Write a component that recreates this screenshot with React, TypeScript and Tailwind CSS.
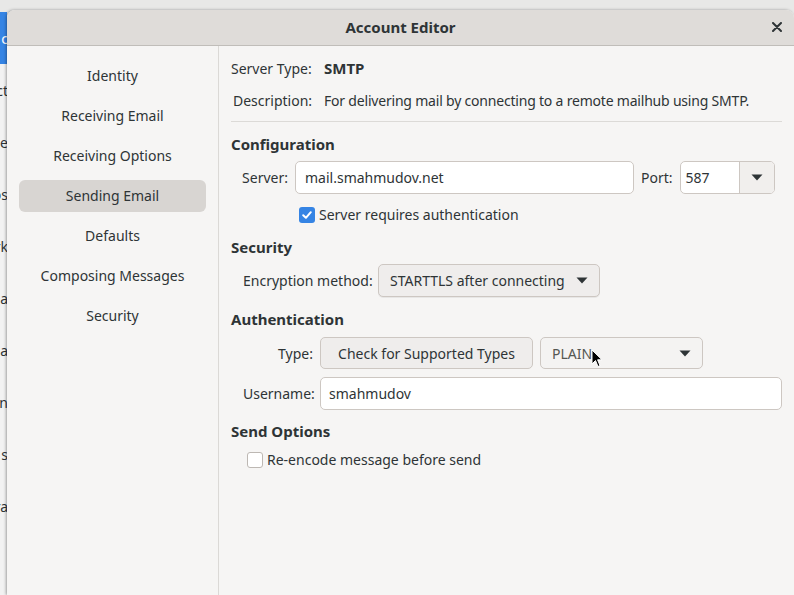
import { useState } from 'react';

const font = { fontFamily: '"Noto Sans", "Open Sans", sans-serif' };

const pages = [
  'Identity',
  'Receiving Email',
  'Receiving Options',
  'Sending Email',
  'Defaults',
  'Composing Messages',
  'Security',
];

// bits of the main window peeking out at the left edge
const behind = [
  { t: 'c', blue: true },
  { t: 'ct' },
  { t: 'e' },
  { t: 'os' },
  { t: 'rk' },
  { t: 'a' },
  { t: 'sa' },
  { t: 'n' },
  { t: 's' },
  { t: 'ra' },
];

function Caret() {
  return (
    <svg width="12" height="7" viewBox="0 0 12 7" className="shrink-0">
      <path d="M0.5 0.5 L11.5 0.5 L6 6.5 Z" fill="#2e3436" />
    </svg>
  );
}

function Check({ on }: { on: boolean }) {
  return on ? (
    <span className="flex h-4 w-4 items-center justify-center rounded-[3px] bg-[#3584e4]">
      <svg width="12" height="12" viewBox="0 0 12 12">
        <path d="M2.2 6.2 L4.9 8.8 L9.8 3.2" fill="none" stroke="#fff" strokeWidth="2" strokeLinecap="round" strokeLinejoin="round" />
      </svg>
    </span>
  ) : (
    <span className="h-4 w-4 rounded-[3px] border border-[#bdb8b3] bg-white" />
  );
}

export default function App() {
  const [selected, setSelected] = useState('Sending Email');
  const [auth, setAuth] = useState(true);
  const [reencode, setReencode] = useState(false);

  return (
    <div className="relative flex h-[595px] w-[794px] overflow-hidden bg-[#e8e8e7] text-[14px] text-[#2e3436]" style={font}>
      <div className="mt-[12px] flex w-[7px] shrink-0 flex-col overflow-hidden bg-[#f2f2f2] text-[#2e3436]">
        {behind.map((b, i) => (
          <div
            key={i}
            className={`flex h-[52px] shrink-0 items-center justify-end whitespace-nowrap ${b.blue ? 'bg-[#3584e4] text-white' : ''}`}
          >
            <span className="-mr-[1px]">{b.t}</span>
          </div>
        ))}
      </div>

      <div className="mt-[10px] flex flex-1 flex-col overflow-hidden rounded-t-[8px] bg-[#f6f5f4] shadow-[-1px_0_3px_rgba(0,0,0,0.35)]">
        <div className="relative flex h-[36px] shrink-0 items-center justify-center border-b border-[#c0bdb9] bg-[#dfdcd9]">
          <span className="text-[15px] font-bold">Account Editor</span>
          <button className="absolute right-[8px] top-[8px] flex h-[18px] w-[18px] items-center justify-center">
            <svg width="10" height="10" viewBox="0 0 10 10">
              <path d="M1 1 L9 9 M9 1 L1 9" stroke="#2e3436" strokeWidth="2" strokeLinecap="round" />
            </svg>
          </button>
        </div>

        <div className="flex flex-1">
          <nav className="flex w-[212px] shrink-0 flex-col gap-2 border-r border-[#dbd9d6] px-[12px] pt-[14px]">
            {pages.map((p) => (
              <button
                key={p}
                onClick={() => setSelected(p)}
                className={`h-[32px] rounded-[6px] pb-[1px] text-center leading-[20px] ${selected === p ? 'bg-[#d8d5d2]' : ''}`}
              >
                {p}
              </button>
            ))}
          </nav>

          <div className="flex flex-1 flex-col px-[12px] pt-[10px]">
            <div className="flex h-[24px] items-center">
              <span className="w-[93px]">Server Type:</span>
              <span className="text-[15px] font-bold">SMTP</span>
            </div>
            <div className="mt-[8px] flex h-[24px] items-center">
              <span className="w-[93px] pl-[2px]">Description:</span>
              <span className="tracking-[-0.2px]">For delivering mail by connecting to a remote mailhub using SMTP.</span>
            </div>
            <div className="mt-[9px] h-px bg-[#dcdad7]" />

            <div className="mt-[12px] text-[15px] font-bold leading-[20px]">Configuration</div>
            <div className="mt-[7px] flex items-center">
              <span className="w-[57px] text-right">Server:</span>
              <div className="ml-[7px] flex h-[33px] w-[339px] items-center rounded-[5px] border border-[#cdc7c2] bg-white px-[9px]">
                mail.smahmudov.net
              </div>
              <span className="ml-[7px]">Port:</span>
              <div className="ml-[7px] flex h-[33px] w-[95px] overflow-hidden rounded-[5px] border border-[#cdc7c2] bg-white">
                <div className="flex flex-1 items-center px-[5px]">587</div>
                <div className="flex w-[35px] items-center justify-center border-l border-[#cdc7c2] bg-[#f1efed]">
                  <Caret />
                </div>
              </div>
            </div>
            <label className="ml-[68px] mt-[10px] flex cursor-pointer items-center gap-[4px]" onClick={() => setAuth(!auth)}>
              <Check on={auth} />
              <span>Server requires authentication</span>
            </label>

            <div className="mt-[12px] text-[15px] font-bold leading-[20px]">Security</div>
            <div className="mt-[7px] flex items-center">
              <span className="ml-[12px] w-[135px]">Encryption method:</span>
              <button className="flex h-[33px] w-[222px] items-center justify-between rounded-[5px] border border-[#cdc7c2] bg-[#efedec] px-[11px] shadow-[0_1px_0_rgba(0,0,0,0.06)]">
                <span>STARTTLS after connecting</span>
                <Caret />
              </button>
            </div>

            <div className="mt-[12px] text-[15px] font-bold leading-[20px]">Authentication</div>
            <div className="mt-[8px] flex items-center">
              <span className="w-[82px] text-right">Type:</span>
              <button className="ml-[7px] flex h-[32px] w-[213px] items-center justify-center rounded-[5px] border border-[#cdc7c2] bg-[#efedec]">
                Check for Supported Types
              </button>
              <button className="ml-[7px] flex h-[32px] w-[163px] items-center justify-between rounded-[5px] border border-[#cdc7c2] bg-[#f4f3f2] pl-[11px] pr-[11px] text-[#555753]">
                <span>PLAIN</span>
                <Caret />
              </button>
            </div>
            <div className="mt-[8px] flex items-center">
              <span className="ml-[12px] w-[77px]">Username:</span>
              <div className="flex h-[33px] w-[462px] items-center rounded-[5px] border border-[#cdc7c2] bg-white px-[8px]">
                smahmudov
              </div>
            </div>

            <div className="mt-[11px] text-[15px] font-bold leading-[20px]">Send Options</div>
            <label className="ml-[16px] mt-[8px] flex cursor-pointer items-center gap-[4px]" onClick={() => setReencode(!reencode)}>
              <Check on={reencode} />
              <span>Re-encode message before send</span>
            </label>
          </div>
        </div>
      </div>

      <svg className="pointer-events-none absolute left-[591px] top-[349px]" width="12" height="19" viewBox="0 0 12 19">
        <path d="M1 1 L1 15 L4.5 11.5 L7 17.5 L9 16.6 L6.6 10.8 L11 10.8 Z" fill="#000" stroke="#fff" strokeWidth="1" strokeLinejoin="round" />
      </svg>
    </div>
  );
}
